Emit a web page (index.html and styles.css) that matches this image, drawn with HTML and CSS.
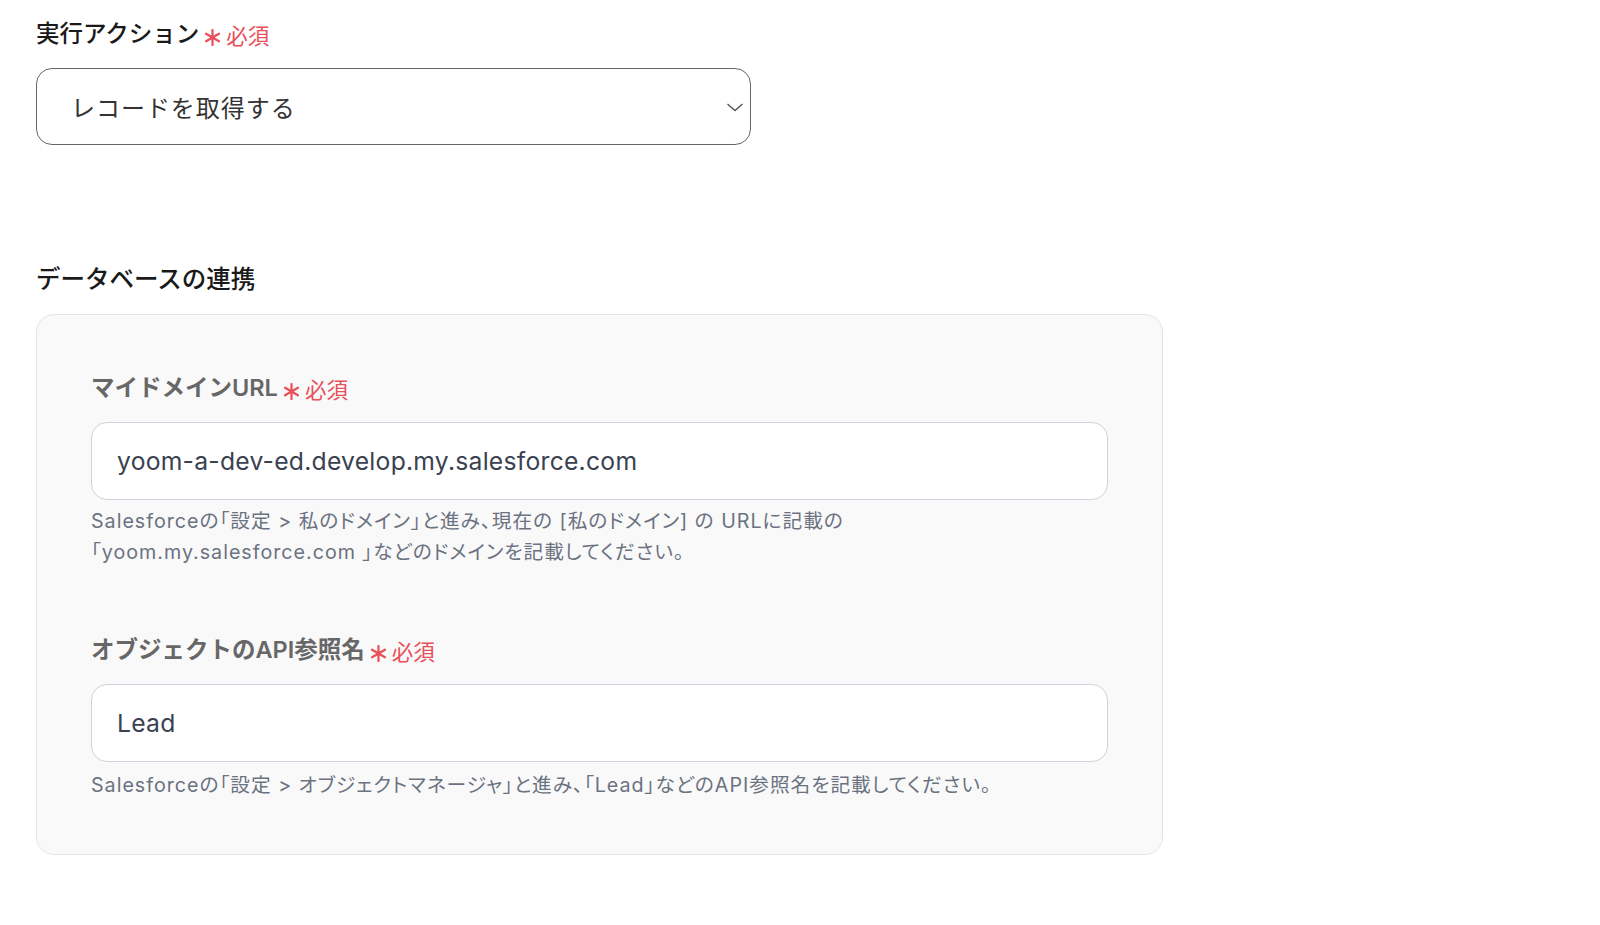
FILE: index.html
```html
<!DOCTYPE html>
<html lang="ja">
<head>
<meta charset="utf-8">
<title>Salesforce</title>
<link rel="stylesheet" href="styles.css">
</head>
<body>
<main class="page">
  <div class="field-title">
    <span class="title-text">実行アクション</span>
    <span class="req"><svg class="ast" width="17" height="17" viewBox="0 0 16 16"><path d="M8 1 V15 M1.94 4.5 L14.06 11.5 M1.94 11.5 L14.06 4.5" stroke="currentColor" stroke-width="2.1" stroke-linecap="round"/></svg>必須</span>
  </div>
  <div class="select">
    <span class="select-text">レコードを取得する</span>
    <svg class="chev" width="18" height="10" viewBox="0 0 18 10"><path d="M1.5 2 L9 8.5 L16.5 2" fill="none" stroke="#555" stroke-width="1.4"/></svg>
  </div>

  <h2 class="section-title">データベースの連携</h2>
  <section class="card">
    <div class="label"><span>マイドメインURL</span><span class="req"><svg class="ast" width="17" height="17" viewBox="0 0 16 16"><path d="M8 1 V15 M1.94 4.5 L14.06 11.5 M1.94 11.5 L14.06 4.5" stroke="currentColor" stroke-width="2.1" stroke-linecap="round"/></svg>必須</span></div>
    <div class="input">yoom-a-dev-ed.develop.my.salesforce.com</div>
    <p class="help">Salesforceの「設定 &gt; 私のドメイン」と進み、現在の [私のドメイン] の URLに記載の<br>「yoom.my.salesforce.com 」などのドメインを記載してください。</p>

    <div class="label label-2"><span>オブジェクトのAPI参照名</span><span class="req"><svg class="ast" width="17" height="17" viewBox="0 0 16 16"><path d="M8 1 V15 M1.94 4.5 L14.06 11.5 M1.94 11.5 L14.06 4.5" stroke="currentColor" stroke-width="2.1" stroke-linecap="round"/></svg>必須</span></div>
    <div class="input">Lead</div>
    <p class="help help-2">Salesforceの「設定 &gt; オブジェクトマネージャ」と進み、「Lead」などのAPI参照名を記載してください。</p>
  </section>
</main>
</body>
</html>
```

FILE: styles.css
```css
* { box-sizing: border-box; }
html, body { margin: 0; padding: 0; background: #fff; }
body {
  font-family: Inter, "Noto Sans CJK JP", sans-serif;
  color: #222;
}
.page {
  padding: 19px 0 0 36px;
}
.field-title {
  display: flex;
  align-items: center;
  height: 30px;
  line-height: 30px;
}
.title-text {
  font-size: 23.5px;
  font-weight: 500;
  color: #1a1a1a;
}
.req {
  display: inline-flex;
  align-items: center;
  color: #e8505a;
  font-size: 21.5px;
  font-weight: 400;
  margin-left: 5px;
  position: relative;
  top: 2px;
}
.ast {
  display: block;
  margin-right: 5px;
  position: relative;
  top: 1px;
}
.select {
  margin-top: 19px;
  width: 715px;
  height: 77px;
  border: 1.5px solid #666;
  border-radius: 16px;
  display: flex;
  align-items: center;
  justify-content: space-between;
  padding: 0 6px 0 34px;
}
.select-text {
  font-size: 24px;
  color: #333;
  letter-spacing: 0.04em;
}
.section-title {
  margin: 119px 0 0;
  font-size: 24.5px;
  font-weight: 500;
  line-height: 30px;
  color: #1a1a1a;
}
.card {
  margin-top: 20px;
  width: 1127px;
  height: 541px;
  background: #f9f9fa;
  border: 1.5px solid #e3e5e8;
  border-radius: 18px;
  padding: 58px 54px 0 54px;
}
.label {
  display: flex;
  align-items: center;
  height: 30px;
  line-height: 30px;
  font-size: 23.5px;
  font-weight: 600;
  color: #676767;
}
.label-2 { margin-top: 67px; }
.input {
  margin-top: 19px;
  height: 78px;
  background: #fff;
  border: 1.5px solid #cdd3dc;
  border-radius: 16px;
  display: flex;
  align-items: center;
  padding: 0 25px;
  font-size: 24.7px;
  color: #3a4250;
  letter-spacing: 0.01em;
}
.help {
  margin: 6px 0 0;
  font-size: 19.7px;
  line-height: 31px;
  color: #6b7280;
  letter-spacing: 0.05em;
  font-feature-settings: "palt";
}
.help-2 { margin-top: 8px; }
```
